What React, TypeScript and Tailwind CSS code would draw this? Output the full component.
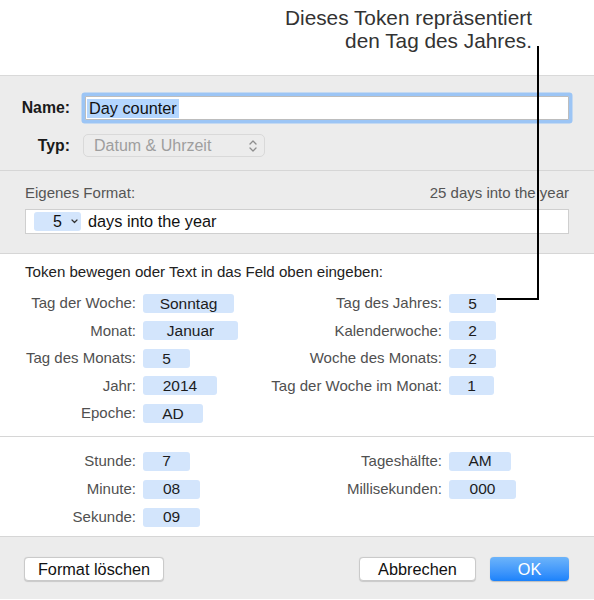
import React from "react";

const Token = ({ w, children }: { w: number; children: React.ReactNode }) => (
  <div
    className="ml-[7px] shrink-0 h-[19px] rounded-[3px] bg-[#d3e5fc] flex items-center justify-center text-[15.5px] text-[#1c1c1c]"
    style={{ width: w }}
  >
    {children}
  </div>
);

const Row = ({
  labelW,
  label,
  w,
  value,
  h,
}: {
  labelW: number;
  label: string;
  w: number;
  value: string;
  h: string;
}) => (
  <div className={`flex items-center ${h}`}>
    <div className="shrink-0 flex justify-end text-[15px] text-[#505050] whitespace-nowrap" style={{ width: labelW }}>
      <span>{label}</span>
    </div>
    <Token w={w}>{value}</Token>
  </div>
);

export default function App() {
  return (
    <div className="relative w-[594px] h-[600px] bg-white font-['Liberation_Sans',Arial,sans-serif] overflow-hidden">
      {/* callout */}
      <div className="h-[75px] flex flex-col items-end pr-[62px] pt-[6px] text-[20.8px] leading-[23px] text-[#333]">
        <div>Dieses Token repräsentiert</div>
        <div>den Tag des Jahres.</div>
      </div>

      <div className="bg-[#ececec] border-t border-[#d9d9d9]">
        {/* Section 1 */}
        <div className="h-[95px] border-b border-[#d6d6d6] pt-[20px]">
          <div className="flex items-center h-[24px]">
            <div className="w-[70px] text-right text-[15.8px] font-bold text-[#1a1a1a]">Name:</div>
            <div className="ml-[15px] w-[484px] h-[24px] bg-white border border-[#bdbdbd] shadow-[0_0_0_3.5px_#9cc5f5] rounded-[1px] flex items-center pl-[1px]">
              <span className="bg-[#b4d6fe] text-[16.3px] text-[#111] leading-[19px] px-[2px]">Day counter</span>
            </div>
          </div>
          <div className="flex items-center h-[23px] mt-[14px]">
            <div className="w-[70px] text-right text-[15.8px] font-bold text-[#1a1a1a]">Typ:</div>
            <div className="ml-[13px] w-[182px] h-[23px] border border-[#d9d9d9] rounded-[5px] flex items-center justify-between pl-[10px] pr-[6px]">
              <span className="text-[16px] text-[#9e9e9e]">Datum &amp; Uhrzeit</span>
              <svg width="10" height="16" viewBox="0 0 10 16" fill="none" stroke="#8e8e8e" strokeWidth="1.3" strokeLinecap="round" strokeLinejoin="round">
                <path d="M2 6 L5 3 L8 6" />
                <path d="M2 10 L5 13 L8 10" />
              </svg>
            </div>
          </div>
        </div>

        {/* Section 2 */}
        <div className="h-[83px] border-b border-[#d6d6d6] px-[25px] pt-[13px]">
          <div className="flex justify-between text-[15px] text-[#555] leading-[18px]">
            <span>Eigenes Format:</span>
            <span>25 days into the year</span>
          </div>
          <div className="mt-[7px] h-[25px] bg-white border border-[#cfcfcf] flex items-center pl-[8px]">
            <div className="w-[47px] h-[19px] rounded-[3px] bg-[#d3e5fc] flex items-center pl-[19px] gap-[9px]">
              <span className="text-[16px] text-[#111]">5</span>
              <svg width="7" height="5" viewBox="0 0 7 5" fill="none" stroke="#333" strokeWidth="1.2" strokeLinecap="round" strokeLinejoin="round">
                <path d="M1 1 L3.5 3.5 L6 1" />
              </svg>
            </div>
            <span className="ml-[7px] text-[16.3px] text-[#111]">days into the year</span>
          </div>
        </div>

        {/* Section 3 */}
        <div className="bg-white h-[183px] border-b border-[#d6d6d6] pt-[9px]">
          <div className="pl-[25px] text-[15.1px] leading-[18px] text-[#222]">
            Token bewegen oder Text in das Feld oben eingeben:
          </div>
          <div className="flex mt-[8.5px]">
            <div className="w-[296px]">
              <Row h="h-[27.5px]" labelW={136} label="Tag der Woche:" w={91} value="Sonntag" />
              <Row h="h-[27.5px]" labelW={136} label="Monat:" w={95} value="Januar" />
              <Row h="h-[27.5px]" labelW={136} label="Tag des Monats:" w={47} value="5" />
              <Row h="h-[27.5px]" labelW={136} label="Jahr:" w={74} value="2014" />
              <Row h="h-[27.5px]" labelW={136} label="Epoche:" w={60} value="AD" />
            </div>
            <div className="flex-1">
              <Row h="h-[27.5px]" labelW={146} label="Tag des Jahres:" w={47} value="5" />
              <Row h="h-[27.5px]" labelW={146} label="Kalenderwoche:" w={47} value="2" />
              <Row h="h-[27.5px]" labelW={146} label="Woche des Monats:" w={47} value="2" />
              <Row h="h-[27.5px]" labelW={146} label="Tag der Woche im Monat:" w={45} value="1" />
            </div>
          </div>
        </div>

        {/* Section 4 */}
        <div className="bg-white h-[100px] border-b border-[#d6d6d6] pt-[10px]">
          <div className="flex">
            <div className="w-[296px]">
              <Row h="h-[28px]" labelW={136} label="Stunde:" w={47} value="7" />
              <Row h="h-[28px]" labelW={136} label="Minute:" w={57} value="08" />
              <Row h="h-[28px]" labelW={136} label="Sekunde:" w={57} value="09" />
            </div>
            <div className="flex-1">
              <Row h="h-[28px]" labelW={146} label="Tageshälfte:" w={62} value="AM" />
              <Row h="h-[28px]" labelW={146} label="Millisekunden:" w={67} value="000" />
            </div>
          </div>
        </div>

        {/* Section 5 */}
        <div className="h-[62px] pt-[20px] px-[24px] flex items-start">
          <button className="w-[140px] h-[24px] bg-white border border-[#cacaca] rounded-[4px] shadow-[0_0.5px_1px_rgba(0,0,0,0.15)] text-[16.3px] text-[#111] flex items-center justify-center">
            Format löschen
          </button>
          <div className="flex-1" />
          <button className="w-[117px] h-[24px] bg-white border border-[#cacaca] rounded-[4px] shadow-[0_0.5px_1px_rgba(0,0,0,0.15)] text-[16.3px] text-[#111] flex items-center justify-center">
            Abbrechen
          </button>
          <button className="ml-[14px] mr-[1px] w-[79px] h-[24px] rounded-[4px] bg-linear-to-b from-[#6cb4fa] to-[#1a82fb] text-[16.3px] text-white flex items-center justify-center shadow-[0_0.5px_1px_rgba(0,0,0,0.2)]">
            OK
          </button>
        </div>
      </div>

      {/* callout line */}
      <div className="absolute left-[537px] top-[46px] w-[2px] h-[254px] bg-black" />
      <div className="absolute left-[497px] top-[298px] w-[42px] h-[2px] bg-black" />
    </div>
  );
}
